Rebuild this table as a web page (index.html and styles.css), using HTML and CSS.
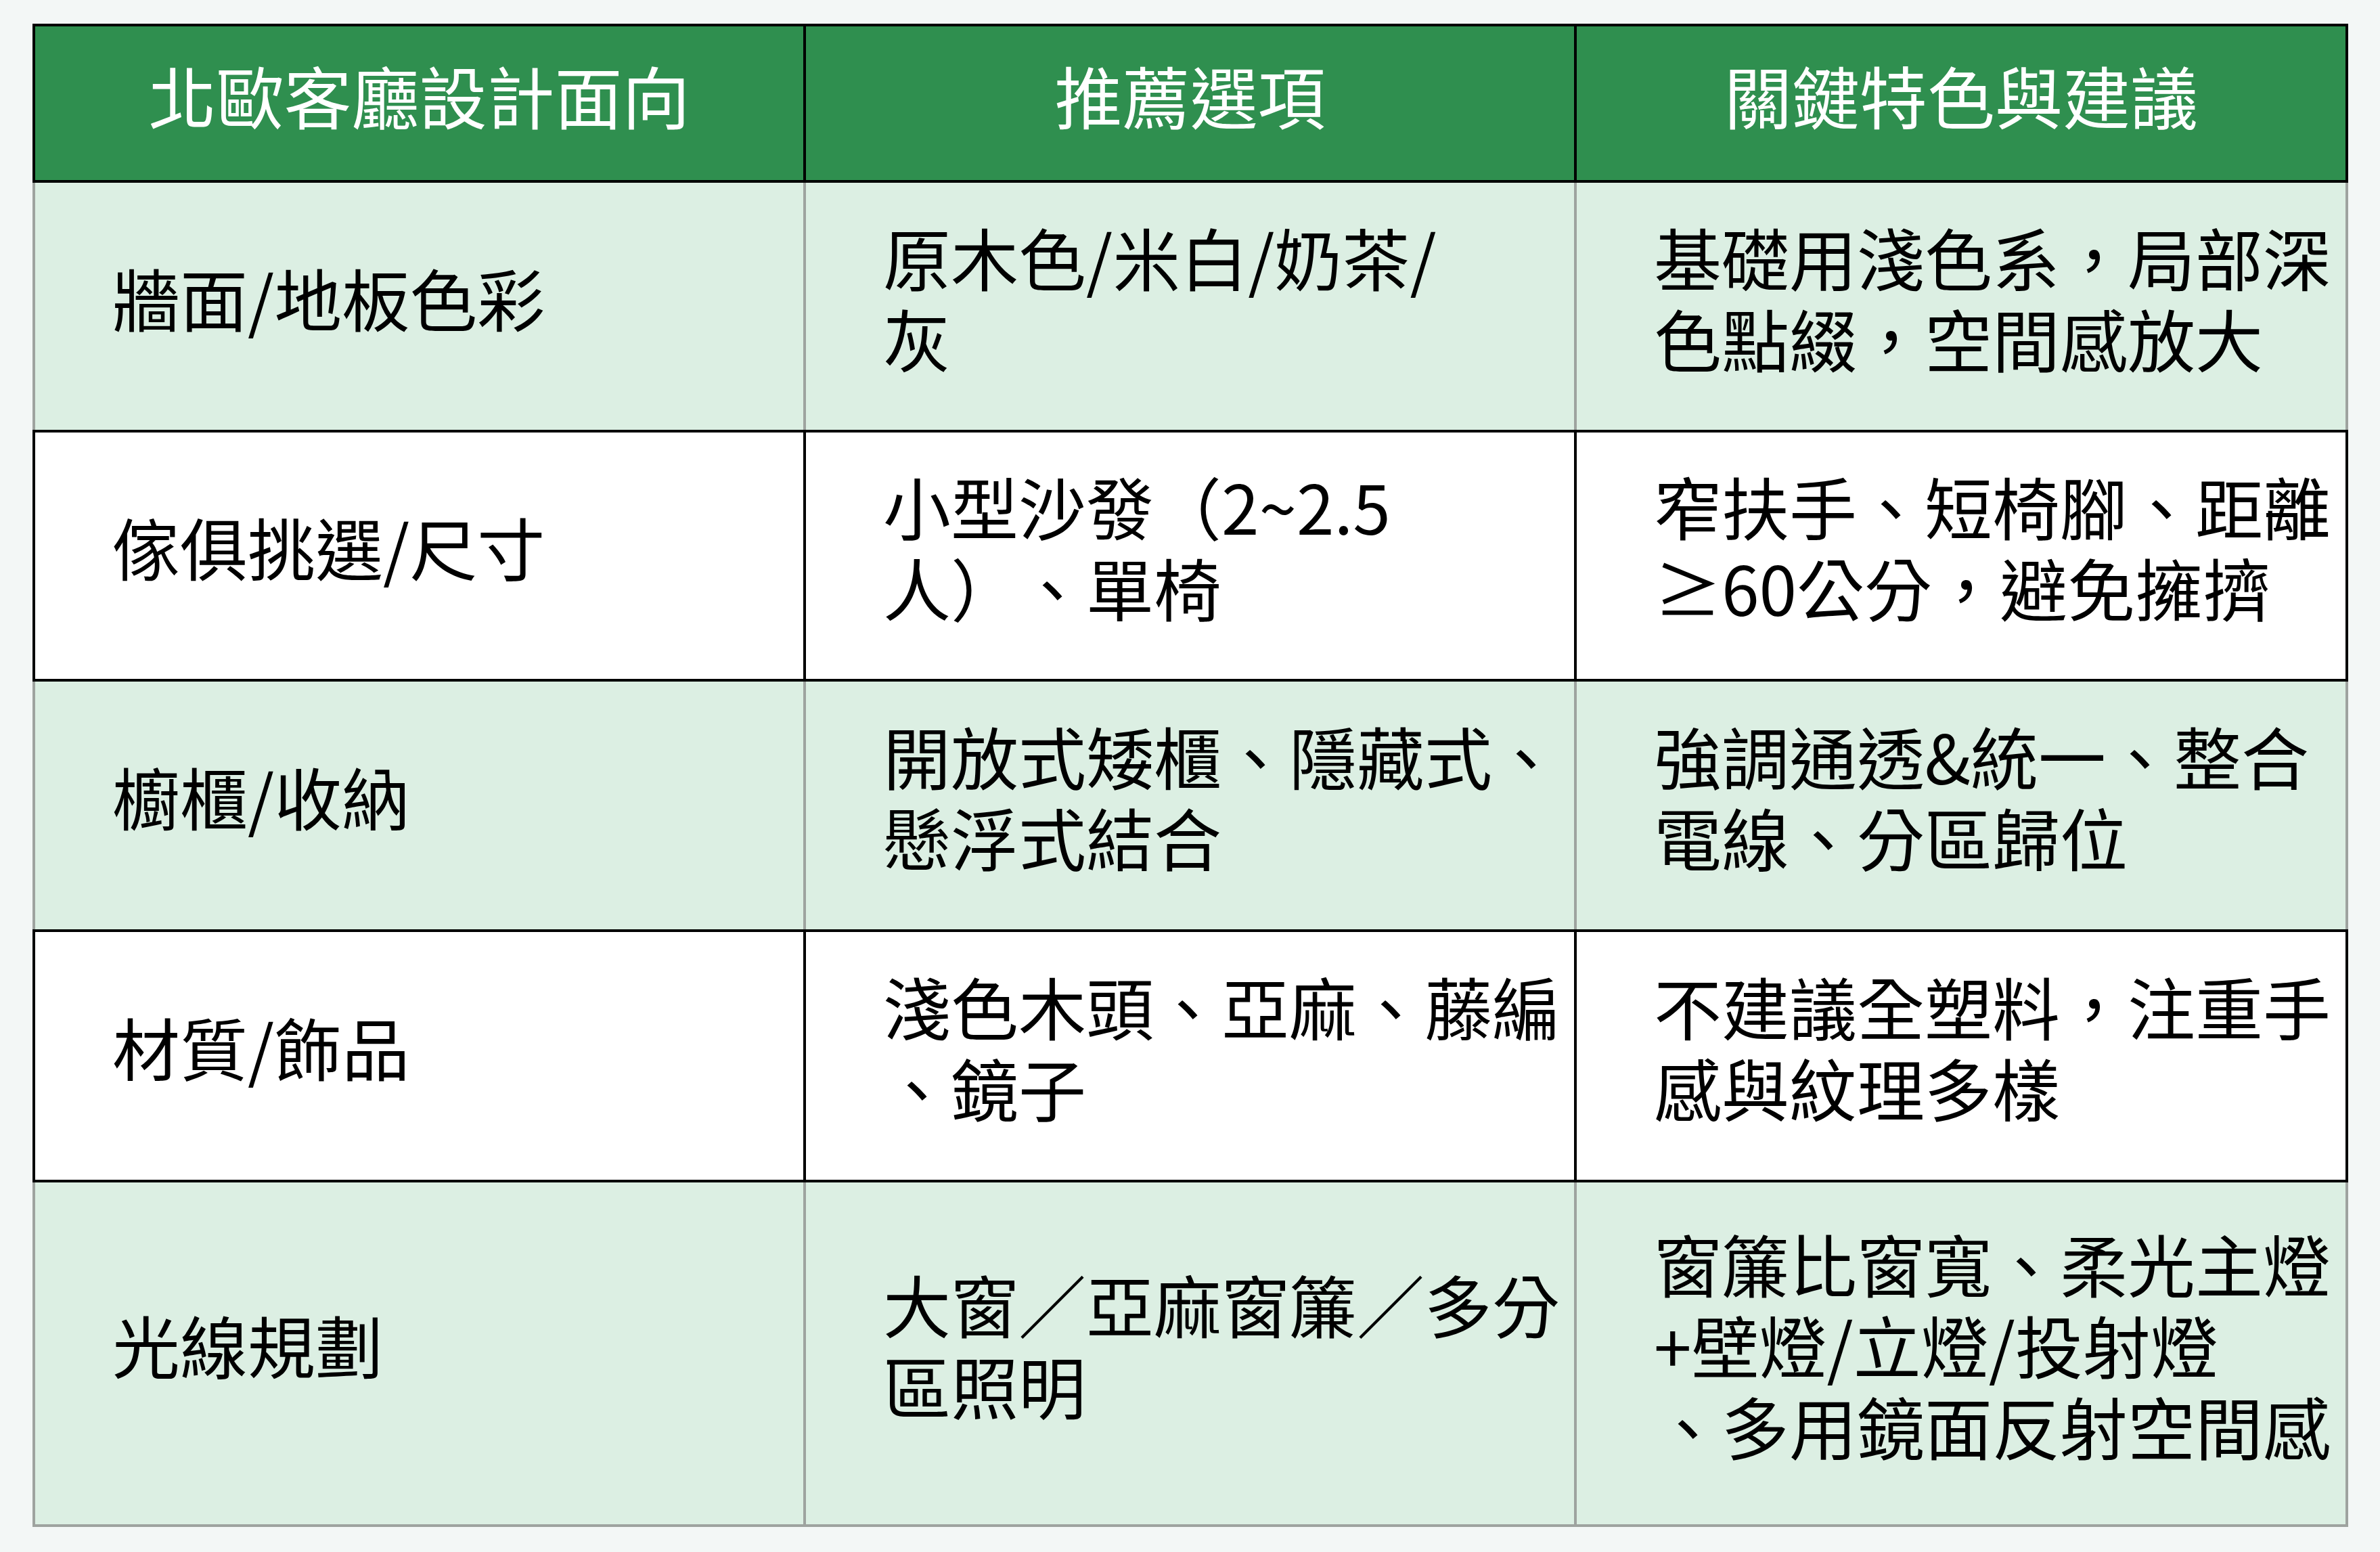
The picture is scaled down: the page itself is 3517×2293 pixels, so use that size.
FILE: index.html
```html
<!DOCTYPE html>
<html lang="zh-Hant">
<head>
<meta charset="utf-8">
<title>北歐客廳設計</title>
<link rel="stylesheet" href="styles.css">
</head>
<body>
<div class="page">
  <div class="table">
    <div class="row head">
      <div class="cell">北歐客廳設計面向</div>
      <div class="cell">推薦選項</div>
      <div class="cell">關鍵特色與建議</div>
    </div>
    <div class="row green r1">
      <div class="cell">牆面/地板色彩</div>
      <div class="cell">原木色/米白/奶茶/<br>灰</div>
      <div class="cell">基礎用淺色系，局部深<br>色點綴，空間感放大</div>
    </div>
    <div class="row white r2">
      <div class="cell">傢俱挑選/尺寸</div>
      <div class="cell">小型沙發（2~2.5<br>人）、單椅</div>
      <div class="cell">窄扶手、短椅腳、距離<br>≥60公分，避免擁擠</div>
    </div>
    <div class="row green r3">
      <div class="cell">櫥櫃/收納</div>
      <div class="cell">開放式矮櫃、隱藏式、<br>懸浮式結合</div>
      <div class="cell">強調通透&amp;統一、整合<br>電線、分區歸位</div>
    </div>
    <div class="row white r4">
      <div class="cell">材質/飾品</div>
      <div class="cell">淺色木頭、亞麻、藤編<br>、鏡子</div>
      <div class="cell">不建議全塑料，注重手<br>感與紋理多樣</div>
    </div>
    <div class="row green last r5">
      <div class="cell">光線規劃</div>
      <div class="cell">大窗／亞麻窗簾／多分<br>區照明</div>
      <div class="cell">窗簾比窗寬、柔光主燈<br>+壁燈/立燈/投射燈<br>、多用鏡面反射空間感</div>
    </div>
  </div>
</div>
</body>
</html>
```
FILE: styles.css
```css
html, body {
  margin: 0;
  padding: 0;
  background: #f3f7f6;
}

.page {
  padding: 35px 0 0 48px;
}

.table {
  display: grid;
  grid-template-columns: 1143px 1139px 1140px;
  grid-template-rows: 235px 365px 372px 366px 374px 509px;
  font-family: "Noto Sans CJK TC", "Noto Sans CJK SC", sans-serif;
  font-size: 100px;
  line-height: 120px;
  color: #000;
}

.row {
  display: contents;
}

.cell {
  box-sizing: border-box;
  display: flex;
  align-items: center;
  padding-left: 114px;
  padding-bottom: 28px;
  white-space: nowrap;
  text-spacing-trim: space-all;
}

.head .cell {
  background: #2f8f4f;
  color: #fff;
  justify-content: center;
  padding-left: 0;
  padding-bottom: 26px;
  border-top: 4px solid #000;
  border-bottom: 4px solid #000;
  border-right: 4px solid #000;
}

.head .cell:first-child {
  border-left: 4px solid #000;
}

.green .cell {
  background: #dcefe3;
  border-right: 4px solid #9ea39f;
}

.green .cell:first-child {
  border-left: 4px solid #9ea39f;
}

.green.last .cell {
  border-bottom: 4px solid #9ea39f;
}

.white .cell {
  background: #ffffff;
  border-top: 4px solid #000;
  border-bottom: 4px solid #000;
  border-right: 4px solid #000;
}

.white .cell:first-child {
  border-left: 4px solid #000;
}
```
